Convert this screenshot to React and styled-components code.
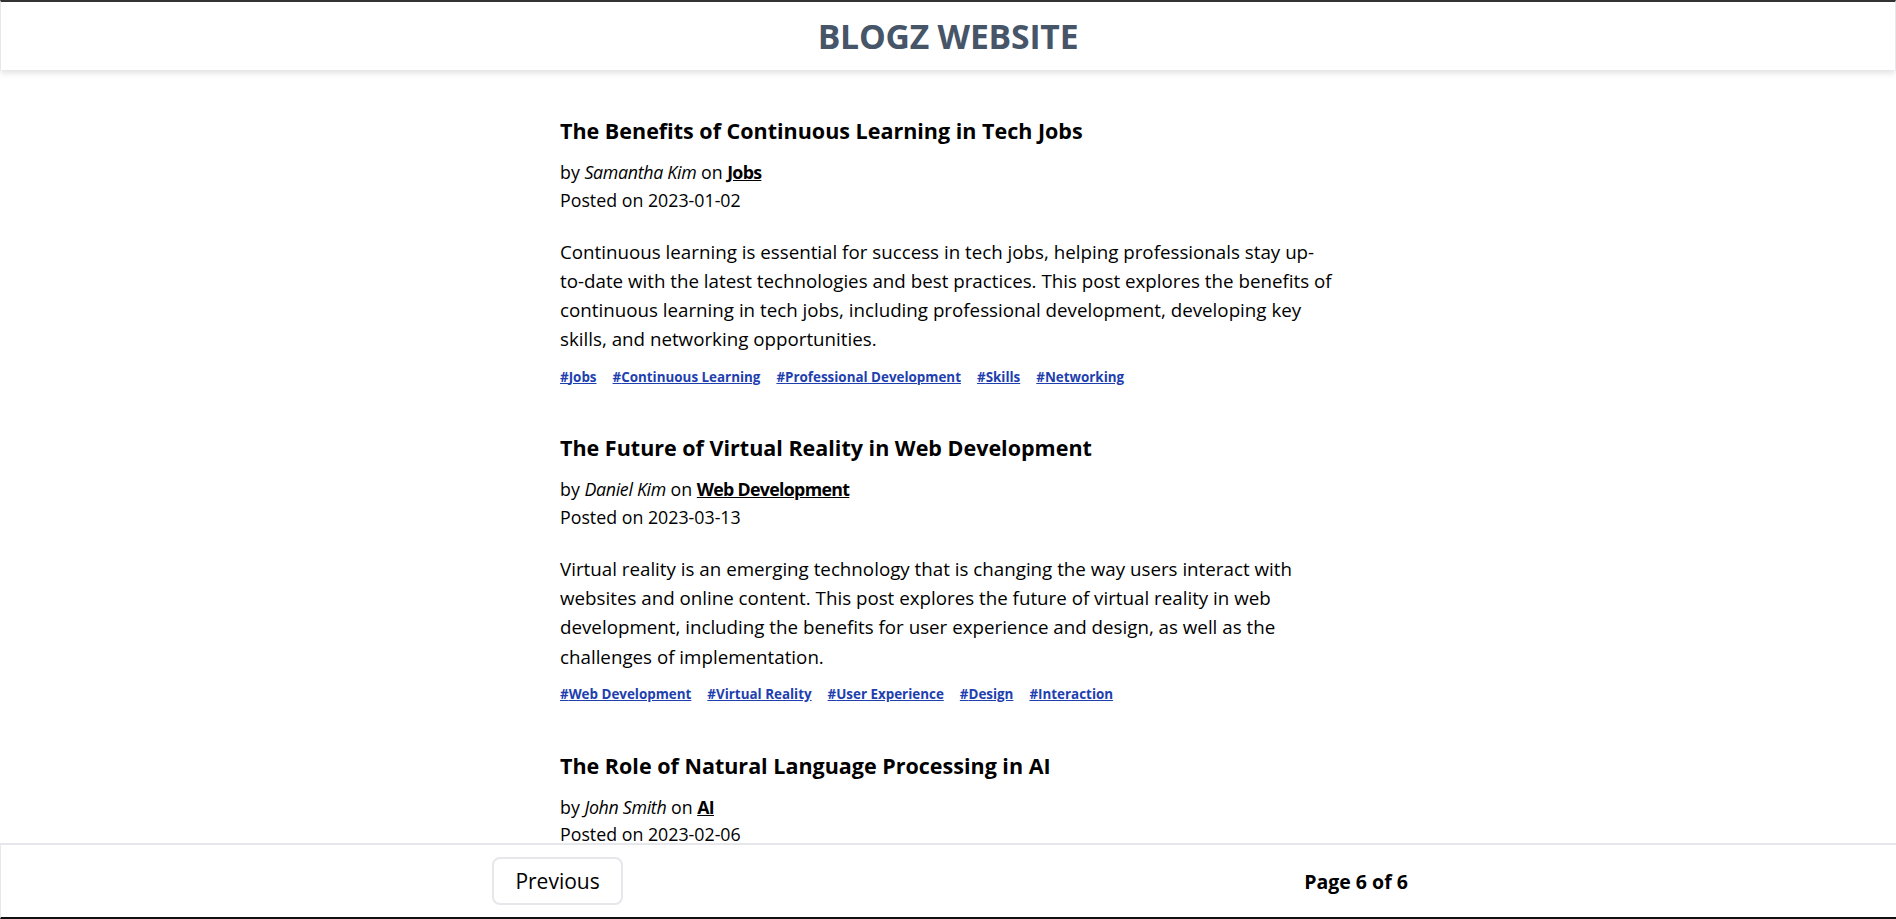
import React from "react";
import styled, { createGlobalStyle } from "styled-components";

const GlobalStyle = createGlobalStyle`
  html {
    scrollbar-width: none;
  }
  body {
    margin: 0;
    background: #fff;
    color: #000;
    font-family: "Open Sans", "Noto Sans", sans-serif;
  }
`;

const posts = [
  {
    title: "The Benefits of Continuous Learning in Tech Jobs",
    author: "Samantha Kim",
    category: "Jobs",
    date: "2023-01-02",
    body:
      "Continuous learning is essential for success in tech jobs, helping professionals stay up-to-date with the latest technologies and best practices. This post explores the benefits of continuous learning in tech jobs, including professional development, developing key skills, and networking opportunities.",
    tags: ["Jobs", "Continuous Learning", "Professional Development", "Skills", "Networking"],
  },
  {
    title: "The Future of Virtual Reality in Web Development",
    author: "Daniel Kim",
    category: "Web Development",
    date: "2023-03-13",
    body:
      "Virtual reality is an emerging technology that is changing the way users interact with websites and online content. This post explores the future of virtual reality in web development, including the benefits for user experience and design, as well as the challenges of implementation.",
    tags: ["Web Development", "Virtual Reality", "User Experience", "Design", "Interaction"],
  },
  {
    title: "The Role of Natural Language Processing in AI",
    author: "John Smith",
    category: "AI",
    date: "2023-02-06",
    body:
      "Natural language processing is a key part of artificial intelligence, allowing machines to understand and respond to human language. This post explores the role of natural language processing in AI, including its applications, challenges, and future directions.",
    tags: ["AI", "Natural Language Processing", "Machine Learning", "Chatbots"],
  },
];

const Header = styled.header`
  height: 68px;
  border-top: 2px solid #333;
  border-left: 1px solid #e5e7eb;
  border-right: 1px solid #e5e7eb;
  background: #fff;
  box-shadow: 0 3px 6px rgba(0, 0, 0, 0.12);
  display: flex;
  align-items: center;
  justify-content: center;
`;

const SiteTitle = styled.h1`
  margin: 0;
  font-size: 33.7px;
  font-weight: 700;
  color: #475569;
  letter-spacing: -0.2px;
`;

const Main = styled.main`
  max-width: 774px;
  margin: 0 auto;
  padding: 45px 2px 120px 0;
`;

const Post = styled.article`
  margin-bottom: 45.5px;
`;

const PostTitle = styled.h2`
  margin: 0 0 12px;
  font-size: 21.5px;
  line-height: 32px;
  font-weight: 700;
`;

const Meta = styled.div`
  margin-bottom: 22.6px;
  font-size: 17.8px;
  line-height: 27.5px;

  em {
    font-style: italic;
    letter-spacing: -0.3px;
  }

  a {
    color: #000;
    font-weight: 700;
    letter-spacing: -0.7px;
    text-decoration: underline;
  }
`;

const Body = styled.p`
  margin: 0 0 13px;
  font-size: 18.75px;
  line-height: 29.3px;
`;

const Tags = styled.div`
  display: flex;
  flex-wrap: wrap;
  gap: 16px;
  line-height: 20px;
`;

const Tag = styled.a`
  font-size: 13.4px;
  font-weight: 700;
  color: #1e40af;
  text-decoration: underline;
`;

const Footer = styled.footer`
  position: fixed;
  left: 0;
  right: 0;
  bottom: 0;
  height: 72px;
  background: #fff;
  border-top: 2px solid #e5e7eb;
  border-bottom: 2px solid #111;
  border-left: 1px solid #e5e7eb;
`;

const Pager = styled.div`
  max-width: 1600px;
  height: 100%;
  margin: 0 auto;
  display: flex;
  align-items: center;
  justify-content: space-around;
`;

const PageButton = styled.button`
  width: 131px;
  height: 48px;
  margin-left: 3px;
  background: #fff;
  border: 2px solid #e5e7eb;
  border-radius: 8px;
  font-family: inherit;
  font-size: 21px;
  color: #000;
  cursor: pointer;
`;

const PageInfo = styled.span`
  font-size: 19.5px;
  font-weight: 700;
`;

export default function App() {
  return (
    <>
      <GlobalStyle />
      <Header>
        <SiteTitle>BLOGZ WEBSITE</SiteTitle>
      </Header>
      <Main>
        {posts.map((post) => (
          <Post key={post.title}>
            <PostTitle>{post.title}</PostTitle>
            <Meta>
              by <em>{post.author}</em> on <a href="#">{post.category}</a>
              <br />
              Posted on {post.date}
            </Meta>
            <Body>{post.body}</Body>
            <Tags>
              {post.tags.map((tag) => (
                <Tag key={tag} href="#">
                  #{tag}
                </Tag>
              ))}
            </Tags>
          </Post>
        ))}
      </Main>
      <Footer>
        <Pager>
          <PageButton>Previous</PageButton>
          <PageInfo>Page 6 of 6</PageInfo>
        </Pager>
      </Footer>
    </>
  );
}
